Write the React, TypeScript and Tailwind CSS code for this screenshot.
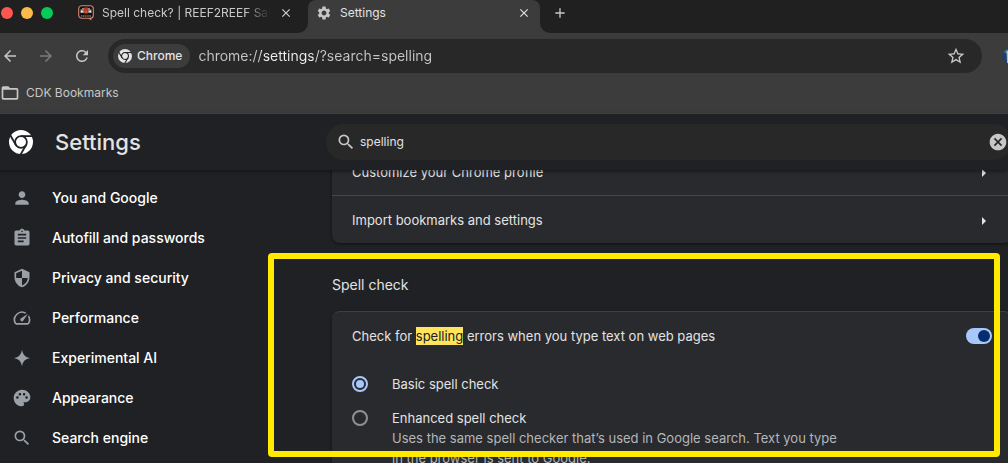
import React from 'react'
import {
  MdAdd,
  MdArrowBack,
  MdArrowForward,
  MdAssignment,
  MdCancel,
  MdClose,
  MdFolderOpen,
  MdPalette,
  MdPerson,
  MdRefresh,
  MdSearch,
  MdSecurity,
  MdSettings,
  MdSpeed,
  MdStarBorder,
} from 'react-icons/md'

type IconProps = { className?: string }

const ChromeLogo = ({ className }: IconProps) => (
  <svg viewBox="0 0 24 24" className={className} aria-hidden="true">
    <circle cx="12" cy="12" r="12" fill="currentColor" />
    <g className="stroke-[#202124]" strokeWidth="1.8" fill="none">
      <circle cx="12" cy="12" r="5.9" />
      <path d="M12 6.1h12" />
      <path d="M12 6.1h12" transform="rotate(120 12 12)" />
      <path d="M12 6.1h12" transform="rotate(240 12 12)" />
    </g>
  </svg>
)

const Sparkle = ({ className }: IconProps) => (
  <svg viewBox="0 0 24 24" className={className} fill="currentColor" aria-hidden="true">
    <path d="M12 2c1 6 4 9 10 10-6 1-9 4-10 10-1-6-4-9-10-10 6-1 9-4 10-10z" />
  </svg>
)

const ReefIcon = ({ className }: IconProps) => (
  <svg viewBox="0 0 16 16" className={className} aria-hidden="true">
    <rect x=".7" y=".7" width="14.6" height="12.6" rx="3" fill="#141010" stroke="#d98870" strokeWidth="1.1" />
    <path d="M10 13.3l3.4 2.2-.2-2.8z" fill="#d98870" />
    <path d="M3.2 4.5v3.5M5 3v5M11 3v5M12.8 4.5v3.5M3 6.5h2.5M10.5 6.5H13" stroke="#f3e4dc" strokeWidth="1.1" />
    <path d="M7 2.5v6M9 2.5v6M6.5 7h3" stroke="#f0522a" strokeWidth="1.4" />
    <path d="M3 11h10" stroke="#b9a9a2" strokeWidth="1" strokeDasharray="1.4 .7" />
  </svg>
)

const ExtensionIcon = ({ className }: IconProps) => (
  <svg viewBox="0 0 16 16" className={className} aria-hidden="true">
    <circle cx="8" cy="8" r="7.5" fill="#123f7f" />
    <path d="M1.5 5a7.5 7.5 0 0 1 4-4v4z" fill="#2377a8" />
    <path d="M4.5 3l5.5-2.5 5 5v5l-6 5-4-.5z" fill="#f2ab55" />
    <path d="M5.5 4l3-2v5l-2 2z" fill="#ffe0a0" />
  </svg>
)

const menu = [
  { label: 'You and Google', Icon: MdPerson },
  { label: 'Autofill and passwords', Icon: MdAssignment },
  { label: 'Privacy and security', Icon: MdSecurity },
  { label: 'Performance', Icon: MdSpeed },
  { label: 'Experimental AI', Icon: Sparkle },
  { label: 'Appearance', Icon: MdPalette },
  { label: 'Search engine', Icon: MdSearch },
]

const TabStrip = () => (
  <div className="flex h-[33px] shrink-0 bg-[#3c3c3c]">
    <div className="flex w-[308px] shrink-0 items-start rounded-br-[10px] bg-[#202020] pl-px">
      <div className="flex h-[26px] items-center gap-2">
        <button aria-label="Close window" className="size-3 rounded-full bg-[#ff5651]" />
        <button aria-label="Minimize window" className="size-3 rounded-full bg-[#fdbc4a]" />
        <button aria-label="Zoom window" className="size-3 rounded-full bg-[#05cb59]" />
      </div>
      <div className="ml-[25px] flex h-[26px] min-w-0 items-center">
        <ReefIcon className="size-4 shrink-0" />
        <span className="ml-2 w-[168px] overflow-hidden whitespace-nowrap text-xs text-[#c9c9c9] mask-r-from-85% mask-r-to-100%">
          Spell check? | REEF2REEF Saltwater
        </span>
        <button aria-label="Close tab" className="ml-[9px] text-[#d0d0d0]">
          <MdClose className="size-3.5" />
        </button>
      </div>
    </div>
    <div className="w-[232px] shrink-0 bg-[#202020]">
      <div className="h-full rounded-t-lg bg-[#3c3c3c] pr-[9px] pl-2">
        <div className="flex h-[26px] items-center">
          <MdSettings className="size-4 text-[#c7c7c7]" />
          <span className="ml-2 flex-1 text-xs text-[#e3e3e3]">Settings</span>
          <button aria-label="Close tab" className="text-[#e3e3e3]">
            <MdClose className="size-3.5" />
          </button>
        </div>
      </div>
    </div>
    <div className="flex-1 rounded-bl-[10px] bg-[#202020] pl-3">
      <div className="flex h-[26px] items-center">
        <button aria-label="New tab" className="text-[#c7c7c7]">
          <MdAdd className="size-4" />
        </button>
      </div>
    </div>
  </div>
)

const Toolbar = () => (
  <div className="flex h-[46px] shrink-0 items-center overflow-hidden bg-[#3c3c3c]">
    <div className="flex w-[108px] shrink-0 items-center gap-[18px] pl-px text-[#c7c7c7]">
      <button aria-label="Back">
        <MdArrowBack className="size-4.5" />
      </button>
      <button aria-label="Forward" disabled className="text-[#7b7b7b]">
        <MdArrowForward className="size-4.5" />
      </button>
      <button aria-label="Reload">
        <MdRefresh className="size-4.5" />
      </button>
    </div>
    <div className="flex h-[34px] flex-1 items-center rounded-full bg-[#282828] pr-4 pl-[5px]">
      <button className="flex h-6 items-center gap-[5px] rounded-full bg-[#3c3c3c] pr-2 pl-[5px] text-xs font-medium text-[#e3e3e3]">
        <ChromeLogo className="size-3.5" />
        Chrome
      </button>
      <input
        aria-label="Address"
        defaultValue="chrome://settings/?search=spelling"
        className="ml-2 min-w-0 flex-1 bg-[linear-gradient(90deg,#c7c7c7_63px,#f0f0f0_63px,#f0f0f0_115px,#c7c7c7_115px)] bg-clip-text text-sm text-transparent outline-none"
      />
      <button aria-label="Bookmark this tab" className="text-[#c7c7c7]">
        <MdStarBorder className="size-5" />
      </button>
    </div>
    <button aria-label="Extension" className="-mr-2.5 ml-5 shrink-0">
      <ExtensionIcon className="size-4" />
    </button>
  </div>
)

const Arrow = () => (
  <svg viewBox="0 0 4 8" className="h-2 w-1 fill-[#e3e3e3]" aria-hidden="true">
    <path d="M0 0l4 4-4 4z" />
  </svg>
)

const App = () => {
  return (
    <div className="flex h-screen flex-col overflow-hidden bg-[#202124] font-[Inter,sans-serif] text-[#e3e3e3]">
      <TabStrip />
      <Toolbar />
      <div className="flex h-[35px] shrink-0 items-center border-b border-[#4a4a4a] bg-[#3c3c3c] pb-1.5">
        <button className="flex items-center gap-1.5 text-xs text-[#c7c7c7]">
          <MdFolderOpen className="size-5" />
          CDK Bookmarks
        </button>
      </div>

      <header className="z-10 flex h-14 shrink-0 items-center bg-[#202124] shadow-[0_1px_4px_rgba(0,0,0,0.5)]">
        <div className="flex w-[326px] shrink-0 items-center gap-[22px] pl-[9px]">
          <ChromeLogo className="size-6 text-white" />
          <h1 className="text-[22px] leading-7 font-medium">Settings</h1>
        </div>
        <label className="flex h-9 min-w-[686px] flex-1 items-center rounded-full bg-[#282828] pr-1 pl-2.5">
          <MdSearch className="size-5 text-[#c7c7c7]" />
          <input
            aria-label="Search settings"
            defaultValue="spelling"
            className="ml-1 min-w-0 flex-1 bg-transparent text-xs outline-none"
          />
          <button aria-label="Clear search" className="text-[#c7c7c7]">
            <MdCancel className="size-5" />
          </button>
        </label>
      </header>

      <div className="flex min-h-0 flex-1 overflow-hidden">
        <nav className="w-64 shrink-0 pt-2">
          {menu.map(({ label, Icon }) => (
            <a
              key={label}
              href="#"
              className="flex h-10 items-center gap-5 pl-3 text-sm font-medium text-white"
            >
              <Icon className="size-5 text-[#9aa0a6]" />
              {label}
            </a>
          ))}
        </nav>

        <main className="flex-1 pl-[76px]">
          <div className="-mt-[23px] min-w-[680px] rounded-lg bg-[#292a2d] text-[13px] shadow-[0_1px_3px_rgba(0,0,0,0.5)]">
            <button className="flex h-12 w-full items-center justify-between pt-[3px] pr-[26px] pl-5">
              Customize your Chrome profile
              <Arrow />
            </button>
            <button className="flex h-12 w-full items-center justify-between border-t border-[#46474a] pt-[3px] pr-[26px] pl-5">
              Import bookmarks and settings
              <Arrow />
            </button>
          </div>

          <section className="relative min-w-[680px] pt-8">
            <h2 className="text-sm">Spell check</h2>
            <div className="mt-4 rounded-lg border-t border-[#3f4043] bg-[#292a2d] px-5 pb-4 text-[13px] leading-5 shadow-[0_1px_3px_rgba(0,0,0,0.5)]">
              <label className="flex h-12 items-center justify-between">
                <span>
                  Check for <mark className="bg-[#ffe45c] py-px text-[#202124]">spelling</mark> errors when you type text on
                  web pages
                </span>
                <input
                  type="checkbox"
                  role="switch"
                  defaultChecked
                  className="h-4 w-[26px] appearance-none rounded-full bg-[#a8c7fa] before:mt-0.5 before:ml-3 before:block before:size-3 before:rounded-full before:bg-[#062e6f] before:content-['']"
                />
              </label>
              <label className="mt-3.5 flex items-start gap-6">
                <input
                  type="radio"
                  name="spellcheck"
                  defaultChecked
                  className="mt-0.5 size-4 shrink-0 appearance-none rounded-full border-2 border-[#a8c7fa] bg-[#a8c7fa] bg-clip-content p-0.5"
                />
                Basic spell check
              </label>
              <label className="mt-3.5 flex items-start gap-6">
                <input
                  type="radio"
                  name="spellcheck"
                  className="mt-0.5 size-4 shrink-0 appearance-none rounded-full border-2 border-[#8e918f]"
                />
                <span className="w-[450px]">
                  Enhanced spell check
                  <span className="block text-[#b4b6b9]">
                    Uses the same spell checker that’s used in Google search. Text you type in the browser is sent to
                    Google.
                  </span>
                </span>
              </label>
            </div>
            {/* highlight frame around the spell check card */}
            <div className="pointer-events-none absolute top-2.5 right-3 -left-16 h-[204px] rounded-sm border-[6px] border-[#ffea00]" />
          </section>
        </main>
      </div>
    </div>
  )
}

export default App
